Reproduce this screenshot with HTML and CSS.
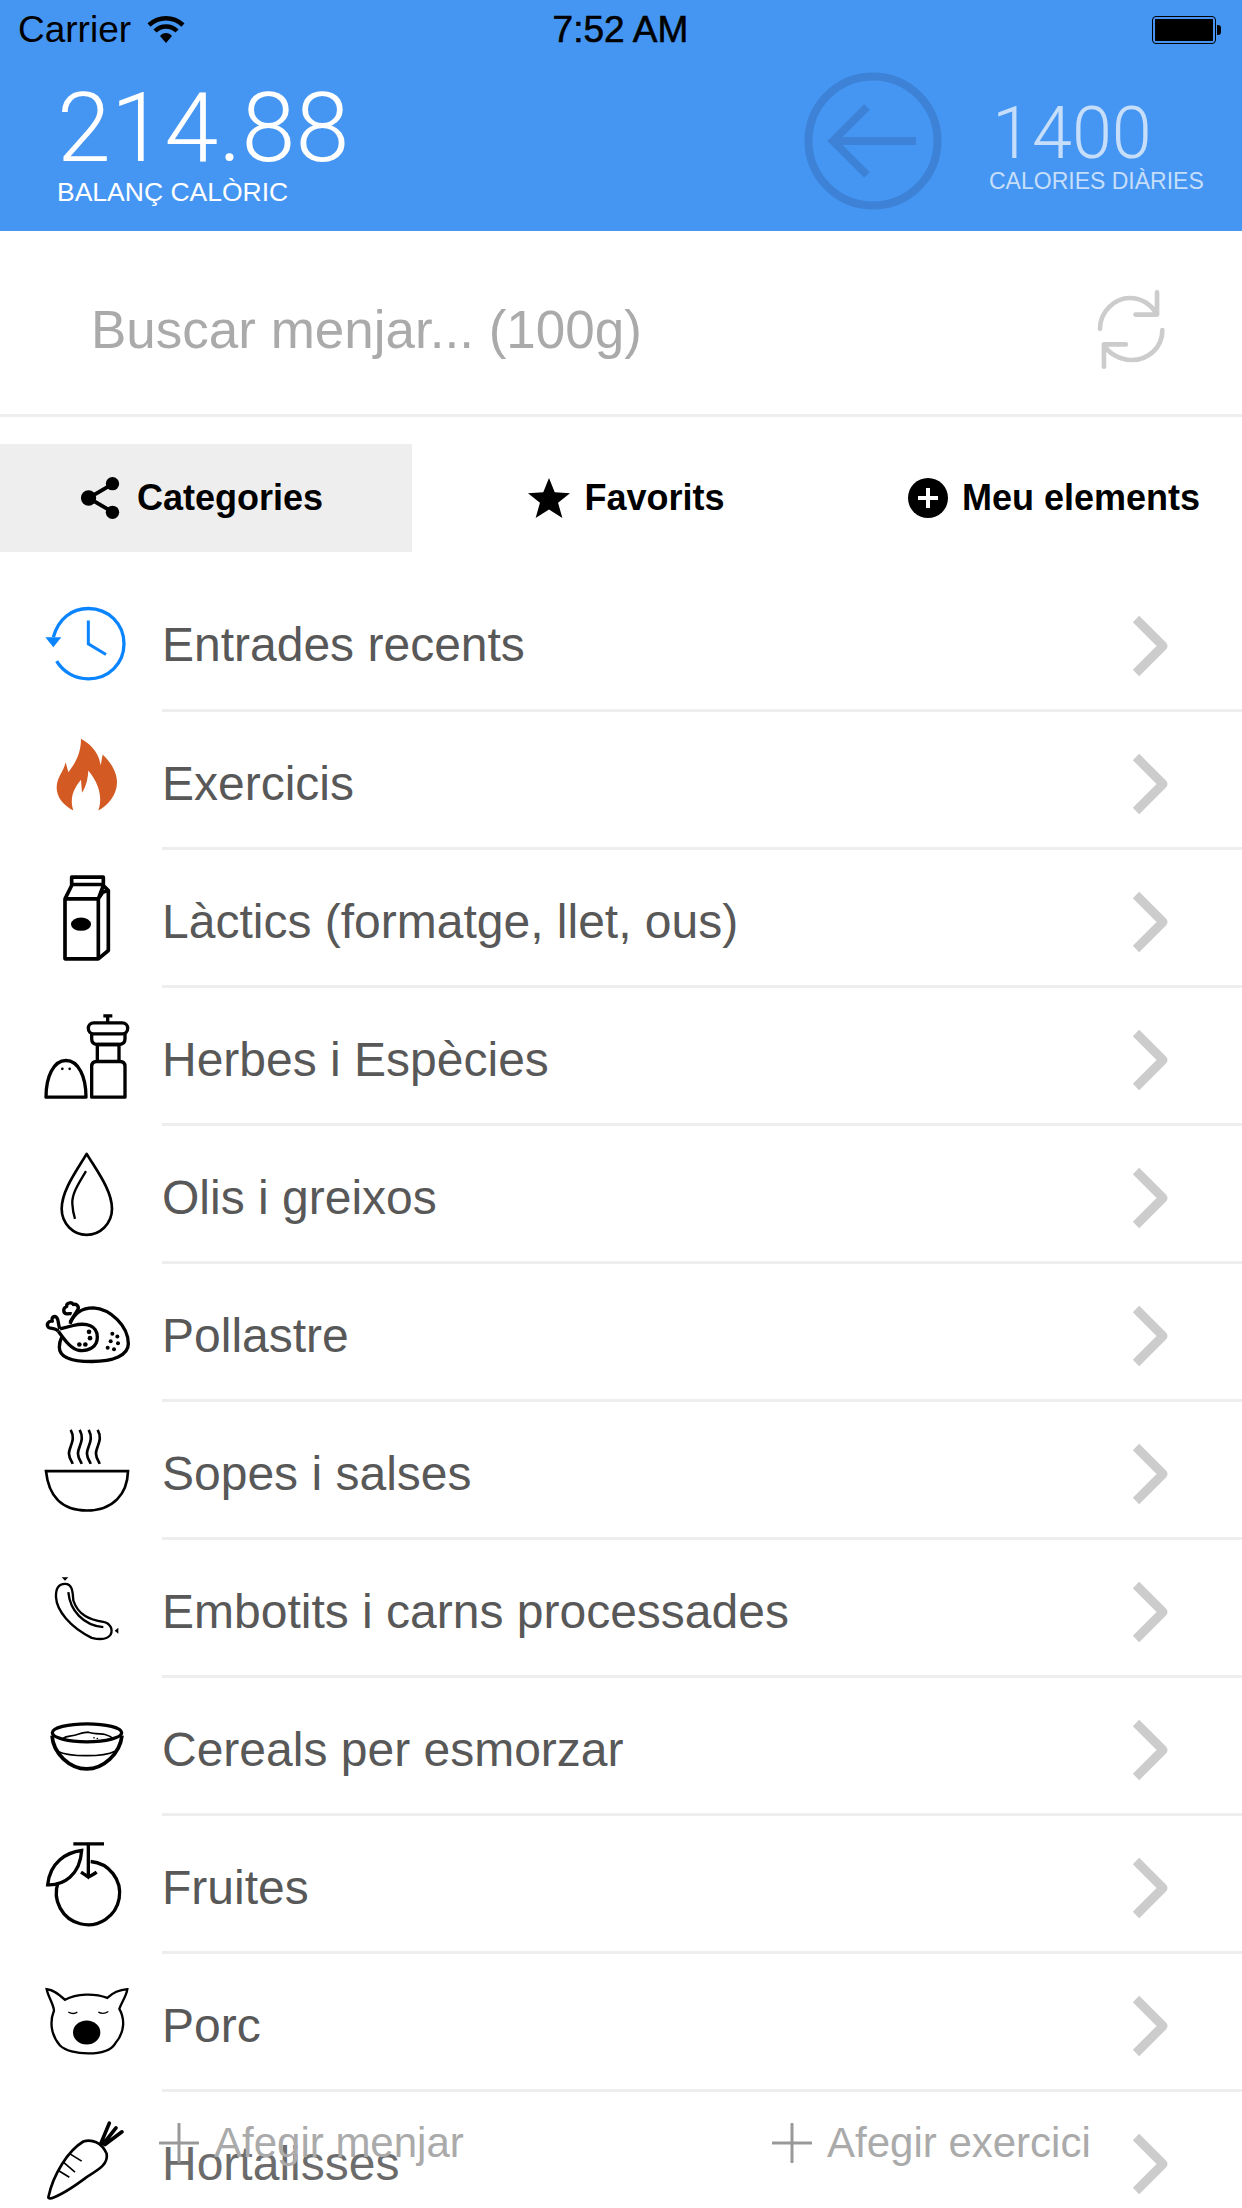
FILE: index.html
```html
<html>
    <head>
        <title>Balanç calòric</title>
        <meta name="viewport" content="width=device-width, initial-scale=1">
        <link rel="stylesheet" href="styles.css">
    </head>
    <body>
        <header class="top">
            <div class="status">
                <div class="status-left">
                    <span>Carrier</span>
                    <svg class="wifi" viewBox="0 0 38 28">
                        <path d="M2 9C12 0 26 0 36 9" fill="none" stroke="#000" stroke-width="4.5"/>
                        <path d="M8 15C14 9 24 9 30 15" fill="none" stroke="#000" stroke-width="4.5"/>
                        <path d="M13 20C16 16 22 16 25 20L19 27Z"/>
                    </svg>
                </div>
                <span class="clock">7:52 AM</span>
                <div class="battery"><i></i></div>
            </div>
            <div class="summary">
                <div class="balance">
                    <div class="balance-value">214.88</div>
                    <div class="balance-label">BALANÇ CALÒRIC</div>
                </div>
                <svg class="back" viewBox="0 0 140 140">
                    <circle cx="70" cy="70" r="64.5" fill="none" stroke="#3d82d6" stroke-width="8"/>
                    <path d="M64 36L30 70L64 104M30 70H113" fill="none" stroke="#3d82d6" stroke-width="8"/>
                </svg>
                <div class="daily">
                    <div class="daily-value">1400</div>
                    <div class="daily-label">CALORIES DIÀRIES</div>
                </div>
            </div>
        </header>

        <section class="search">
            <span class="search-text">Buscar menjar... (100g)</span>
            <svg class="refresh" viewBox="165 55 220 250">
                <path d="M180 178C180 125 225 85 270 85C305 85 335 105 352 135M352 68V135H287M368 182C368 235 325 272 275 272C240 272 205 252 192 225M192 292V225H258" fill="none" stroke="#ccc" stroke-width="14" stroke-linecap="round" stroke-linejoin="round"/>
            </svg>
        </section>

        <nav class="tabs">
            <a class="tab tab-active">
                <svg class="tab-icon" viewBox="0 0 44 46">
                    <path d="M33 9L9 23L33 37" fill="none" stroke="#000" stroke-width="4"/>
                    <circle cx="34" cy="8" r="7"/><circle cx="9" cy="23" r="8"/><circle cx="34" cy="38" r="7"/>
                </svg>
                Categories
            </a>
            <a class="tab tab-mid">
                <svg class="tab-icon tab-star" viewBox="0 0 44 44">
                    <path d="M22 1L28 16L44 17L31.500 27L36 43L22 34L8 43L12.500 27L0 17L16 16Z"/>
                </svg>
                Favorits
            </a>
            <a class="tab tab-last">
                <svg class="tab-icon tab-plus" viewBox="0 0 40 40">
                    <circle cx="20" cy="20" r="20"/>
                    <path d="M20 10V30M10 20H30" stroke="#fff" stroke-width="4"/>
                </svg>
                Meu elements
            </a>
        </nav>

        <ul class="list">
            <li class="row">
                <svg class="icon" viewBox="48 34.500 300 300">
                    <path d="M100 170C115 115 155 84 205 84C265 84 312 130 312 190C312 250 265 295 205 295C165 295 130 275 110 242" fill="none" stroke="#0a84ff" stroke-width="10"/>
                    <path d="M76 170H124L100 200Z" fill="#0a84ff"/>
                    <path d="M205 120V190L258 222" fill="none" stroke="#0a84ff" stroke-width="9"/>
                </svg>
                <div class="row-body"><span class="row-text">Entrades recents</span><svg class="chevron" viewBox="0 0 44 68"><path d="M8 7L35 34L8 61" fill="none" stroke="#ccc" stroke-width="9" stroke-linejoin="round"/></svg></div>
            </li>
            <li class="row">
                <svg class="icon" viewBox="48 448.500 300 300">
                    <path d="M183 475C205 488 236 510 242 555L248 522C272 545 291 575 291 605C291 645 262 675 235 690C245 660 245 620 205 570C204 590 200 615 186 637L183 598C170 615 145 645 160 690C130 675 110 650 110 622C110 590 130 575 137 545L145 575C165 550 183 520 183 475Z" fill="#d35a22"/>
                </svg>
                <div class="row-body"><span class="row-text">Exercicis</span><svg class="chevron" viewBox="0 0 44 68"><path d="M8 7L35 34L8 61" fill="none" stroke="#ccc" stroke-width="9" stroke-linejoin="round"/></svg></div>
            </li>
            <li class="row">
                <svg class="icon" viewBox="18 22.500 300 300">
                    <g fill="none" stroke="#000" stroke-width="11" stroke-linejoin="round">
                        <path d="M105 115H205V295H105ZM105 115L125 75V50H220V75L205 115M125 72H220M205 295L235 270V90L220 75M205 115L218 95L235 90"/>
                    </g>
                    <ellipse cx="153" cy="191" rx="30" ry="20"/>
                </svg>
                <div class="row-body"><span class="row-text">Làctics (formatge, llet, ous)</span><svg class="chevron" viewBox="0 0 44 68"><path d="M8 7L35 34L8 61" fill="none" stroke="#ccc" stroke-width="9" stroke-linejoin="round"/></svg></div>
            </li>
            <li class="row">
                <svg class="icon" viewBox="48 76.500 300 300">
                    <g fill="none" stroke="#000" stroke-width="10" stroke-linejoin="round">
                        <path d="M78 350C78 290 100 240 138 240C176 240 198 290 198 350Z"/>
                        <path d="M215 350V258Q215 243 230 243H300Q315 243 315 258V350Z"/>
                        <path d="M232 243V192H297V243"/>
                        <path d="M215 160V175Q215 192 232 192H297Q315 192 315 175V160"/>
                        <rect x="205" y="127" width="118" height="33" rx="16"/>
                        <path d="M263 127V106M250 106H277"/>
                    </g>
                    <circle cx="127" cy="265" r="4"/><circle cx="149" cy="265" r="4"/>
                </svg>
                <div class="row-body"><span class="row-text">Herbes i Espècies</span><svg class="chevron" viewBox="0 0 44 68"><path d="M8 7L35 34L8 61" fill="none" stroke="#ccc" stroke-width="9" stroke-linejoin="round"/></svg></div>
            </li>
            <li class="row">
                <svg class="icon" viewBox="48 490.500 300 300">
                    <g fill="none" stroke="#000" stroke-linejoin="round">
                        <path d="M200 520C170 570 125 630 125 685C125 730 160 763 200 763C240 763 276 730 276 685C276 630 230 570 200 520Z" stroke-width="8"/>
                        <path d="M198 572C175 610 155 640 157 670C158 690 162 705 165 715" stroke-width="7"/>
                    </g>
                </svg>
                <div class="row-body"><span class="row-text">Olis i greixos</span><svg class="chevron" viewBox="0 0 44 68"><path d="M8 7L35 34L8 61" fill="none" stroke="#ccc" stroke-width="9" stroke-linejoin="round"/></svg></div>
            </li>
            <li class="row">
                <svg class="icon" viewBox="48 64.500 300 300">
                    <g fill="none" stroke="#000" stroke-width="10" stroke-linejoin="round">
                        <path d="M150 190C165 150 195 142 220 142C270 145 325 195 325 250C325 285 280 303 215 303C165 303 118 295 118 260C118 250 120 240 125 230"/>
                        <path d="M120 205L160 195C200 185 232 195 232 230C232 260 205 272 180 270C155 268 135 240 115 212"/>
                        <path d="M120 205C112 190 118 170 105 168C95 168 95 178 97 182C85 180 78 192 85 200C92 206 105 200 115 212"/>
                        <path d="M150 185L172 150C180 140 170 128 160 132C155 122 138 128 140 138C128 142 128 160 142 160C148 160 150 158 155 160"/>
                    </g>
                    <circle cx="207" cy="214" r="7"/><circle cx="210" cy="233" r="7"/><circle cx="178" cy="252" r="7"/><circle cx="196" cy="252" r="7"/>
                    <circle cx="277" cy="220" r="6"/><circle cx="292" cy="228" r="6"/><circle cx="272" cy="242" r="6"/><circle cx="294" cy="248" r="6"/><circle cx="263" cy="262" r="6"/><circle cx="282" cy="266" r="6"/>
                </svg>
                <div class="row-body"><span class="row-text">Pollastre</span><svg class="chevron" viewBox="0 0 44 68"><path d="M8 7L35 34L8 61" fill="none" stroke="#ccc" stroke-width="9" stroke-linejoin="round"/></svg></div>
            </li>
            <li class="row">
                <svg class="icon" viewBox="48 478.500 300 300">
                    <g fill="none" stroke="#000" stroke-width="8">
                        <path d="M78 632H324C322 700 280 750 200 750C120 750 85 700 78 632Z"/>
                        <path d="M152 508C170 540 145 560 147 580C148 595 155 600 158 610"/>
                        <path d="M179 508C197 540 172 560 174 580C175 595 182 600 185 610"/>
                        <path d="M206 508C224 540 199 560 201 580C202 595 209 600 212 610"/>
                        <path d="M233 508C251 540 226 560 228 580C229 595 236 600 239 610"/>
                    </g>
                </svg>
                <div class="row-body"><span class="row-text">Sopes i salses</span><svg class="chevron" viewBox="0 0 44 68"><path d="M8 7L35 34L8 61" fill="none" stroke="#ccc" stroke-width="9" stroke-linejoin="round"/></svg></div>
            </li>
            <li class="row">
                <svg class="icon" viewBox="48 -7.500 300 300">
                    <g fill="none" stroke="#000" stroke-width="7">
                        <path d="M135 70C115 70 107 85 108 110C110 150 150 200 215 232C240 238 262 238 272 222C280 205 270 188 250 184C210 178 175 165 160 120C158 95 158 70 135 70Z"/>
                        <path d="M145 95C150 150 190 195 250 200"/>
                    </g>
                    <path d="M125 50H145L135 61ZM295 202V220L284 211Z"/>
                </svg>
                <div class="row-body"><span class="row-text">Embotits i carns processades</span><svg class="chevron" viewBox="0 0 44 68"><path d="M8 7L35 34L8 61" fill="none" stroke="#ccc" stroke-width="9" stroke-linejoin="round"/></svg></div>
            </li>
            <li class="row">
                <svg class="icon" viewBox="48 406.500 300 300">
                    <g fill="none" stroke="#000">
                        <ellipse cx="201" cy="517" rx="104" ry="27" stroke-width="10"/>
                        <path d="M96 525C100 580 150 625 200 625C250 625 300 580 306 525" stroke-width="11"/>
                        <path d="M112 572C150 590 250 590 285 572" stroke-width="5"/>
                        <path d="M130 533C140 525 150 528 160 525C175 522 190 515 205 515C220 520 245 520 255 522C265 525 272 528 278 533" stroke-width="5"/>
                    </g>
                    <circle cx="222" cy="532" r="2.500"/><circle cx="232" cy="534" r="2.500"/>
                </svg>
                <div class="row-body"><span class="row-text">Cereals per esmorzar</span><svg class="chevron" viewBox="0 0 44 68"><path d="M8 7L35 34L8 61" fill="none" stroke="#ccc" stroke-width="9" stroke-linejoin="round"/></svg></div>
            </li>
            <li class="row">
                <svg class="icon" viewBox="18 25.500 300 300">
                    <g fill="none" stroke="#000" stroke-width="10">
                        <path d="M182 108A95 95 0 1 1 84 172"/>
                        <path d="M155 75C110 80 60 110 53 178C100 180 150 150 155 75Z"/>
                        <path d="M130 55H222M175 55V152M153 140C165 148 172 152 175 155C178 152 190 148 200 140"/>
                    </g>
                </svg>
                <div class="row-body"><span class="row-text">Fruites</span><svg class="chevron" viewBox="0 0 44 68"><path d="M8 7L35 34L8 61" fill="none" stroke="#ccc" stroke-width="9" stroke-linejoin="round"/></svg></div>
            </li>
            <li class="row">
                <svg class="icon" viewBox="48 34.500 300 300">
                    <path d="M135 118C115 100 100 88 80 86C85 110 100 130 102 150C90 180 90 220 120 255C150 285 260 290 285 250C315 215 315 175 298 145C305 125 320 105 322 86C300 88 280 95 262 112C225 98 170 98 135 118Z" fill="none" stroke="#000" stroke-width="7"/>
                    <path d="M145 155C155 160 165 160 172 155M235 155C245 160 255 160 265 153" fill="none" stroke="#000" stroke-width="4"/>
                    <ellipse cx="200" cy="216" rx="41" ry="36"/>
                </svg>
                <div class="row-body"><span class="row-text">Porc</span><svg class="chevron" viewBox="0 0 44 68"><path d="M8 7L35 34L8 61" fill="none" stroke="#ccc" stroke-width="9" stroke-linejoin="round"/></svg></div>
            </li>
            <li class="row">
                <svg class="icon" viewBox="48 448.500 300 300">
                    <path d="M85 710C100 640 145 570 190 543C215 535 245 545 260 580C265 610 240 625 200 650C160 680 120 705 95 713Q85 715 85 710Z" fill="none" stroke="#000" stroke-width="8"/>
                    <path d="M150 580L185 602M130 605L165 635M115 630L148 650" fill="none" stroke="#000" stroke-width="5"/>
                    <path d="M243 548L268 488M250 550L288 502M255 552L306 514" fill="none" stroke="#000" stroke-width="11" stroke-linecap="round"/>
                </svg>
                <div class="row-body"><span class="row-text">Hortalisses</span><svg class="chevron" viewBox="0 0 44 68"><path d="M8 7L35 34L8 61" fill="none" stroke="#ccc" stroke-width="9" stroke-linejoin="round"/></svg></div>
            </li>
        </ul>

        <footer class="actions">
            <a class="action action-food">
                <svg class="plus" viewBox="0 0 40 40"><path d="M20 1V39M1 20H39" stroke="#999" stroke-width="3" stroke-linecap="round"/></svg>
                Afegir menjar
            </a>
            <a class="action action-exercise">
                <svg class="plus" viewBox="0 0 40 40"><path d="M20 1V39M1 20H39" stroke="#999" stroke-width="3" stroke-linecap="round"/></svg>
                Afegir exercici
            </a>
        </footer>
    </body>
</html>
```

FILE: styles.css
```css
html, body {
    margin: 0;
    height: 2208px;
    overflow: hidden;
}

body {
    position: relative;
    background-color: white;
    font-family: "Liberation Sans", Arial, sans-serif;
}

.top {
    height: 231px;
    box-sizing: border-box;
    background-color: #4596f2;
}

.status {
    height: 60px;
    padding: 0 19px 0 18px;
    display: grid;
    grid-template-columns: 1fr auto 1fr;
    align-items: center;
    color: black;
    font-size: 37px;
}

.status-left {
    display: flex;
    align-items: center;
    gap: 16px;
}

.wifi {
    width: 38px;
    height: 28px;
}

.clock {
    -webkit-text-stroke: 0.6px black;
}

.battery {
    justify-self: end;
    position: relative;
    width: 64px;
    height: 28px;
    box-sizing: border-box;
    border: 1px solid black;
    border-radius: 4px;
    padding: 2px;
    margin-right: 7px;
}

.battery::after {
    content: "";
    position: absolute;
    right: -6px;
    top: 8px;
    width: 4px;
    height: 10px;
    background-color: black;
    border-radius: 0 3px 3px 0;
}

.battery i {
    display: block;
    height: 100%;
    background-color: black;
}

.summary {
    display: flex;
    align-items: flex-start;
    padding: 11px 0 0 57px;
    color: white;
}

.balance {
    width: 746px;
    padding-top: 9px;
    box-sizing: border-box;
}

.balance-value {
    font-family: Roboto, sans-serif;
    font-weight: 300;
    font-size: 97px;
    line-height: 96px;
}

.balance-label {
    font-size: 26.500px;
    line-height: 32px;
}

.back {
    width: 140px;
    height: 140px;
}

.daily {
    margin-left: 46px;
    margin-top: 31px;
    color: #c6defa;
    display: flex;
    flex-direction: column;
}

.daily-value {
    font-family: Roboto, sans-serif;
    font-weight: 300;
    font-size: 72px;
    line-height: 64px;
    padding-left: 3px;
}

.daily-label {
    font-size: 23px;
    line-height: 30px;
}

.search {
    height: 183px;
    box-sizing: content-box;
    border-bottom: 3px solid #eee;
    display: flex;
    justify-content: space-between;
    align-items: center;
    padding: 0 74px 0 91px;
}

.search-text {
    color: #aaa;
    font-size: 53px;
    margin-top: 14px;
}

.refresh {
    width: 73px;
    height: 83px;
    margin-top: 14px;
}

.tabs {
    margin-top: 27px;
    height: 108px;
    display: grid;
    grid-template-columns: 412px 418px 412px;
}

.tab {
    display: flex;
    justify-content: center;
    align-items: center;
    gap: 14px;
    font-size: 36px;
    font-weight: bold;
    color: black;
}

.tab-active {
    background-color: #eee;
    padding-right: 10px;
}

.tab-mid {
    padding-left: 8px;
}

.tab-last {
    padding-left: 36px;
}

.tab-icon {
    width: 44px;
    height: 44px;
}

.tab-star {
    width: 42px;
    height: 42px;
    margin-left: 3px;
}

.tab-plus {
    width: 40px;
    height: 40px;
}

.list {
    list-style: none;
    margin: 0;
    padding: 22px 0 0;
}

.row {
    display: flex;
    align-items: stretch;
    height: 138px;
}

.icon {
    width: 100px;
    height: 100px;
    flex: none;
    margin: 17.5px 26px 0 36px;
}

.row-body {
    flex: 1;
    box-sizing: border-box;
    height: 138px;
    padding: 8px 70px 0 0;
    border-bottom: 3px solid #eee;
    display: flex;
    justify-content: space-between;
    align-items: center;
}

.row:first-child .row-text {
    margin-top: -2px;
}

.row-text {
    color: #585858;
    font-size: 48px;
}

.chevron {
    width: 44px;
    height: 68px;
}

.actions {
    position: absolute;
    left: 0;
    right: 0;
    top: 2113px;
}

.action {
    position: absolute;
    top: 0;
    display: flex;
    align-items: center;
    gap: 15px;
    color: #aaa;
    font-size: 42px;
    height: 60px;
    background-color: rgba(255, 255, 255, 0.12);
    box-shadow: 0 0 20px 14px rgba(255, 255, 255, 0.12);
}

.action-food {
    left: 159px;
}

.action-exercise {
    left: 772px;
}

.plus {
    width: 40px;
    height: 40px;
}
```
